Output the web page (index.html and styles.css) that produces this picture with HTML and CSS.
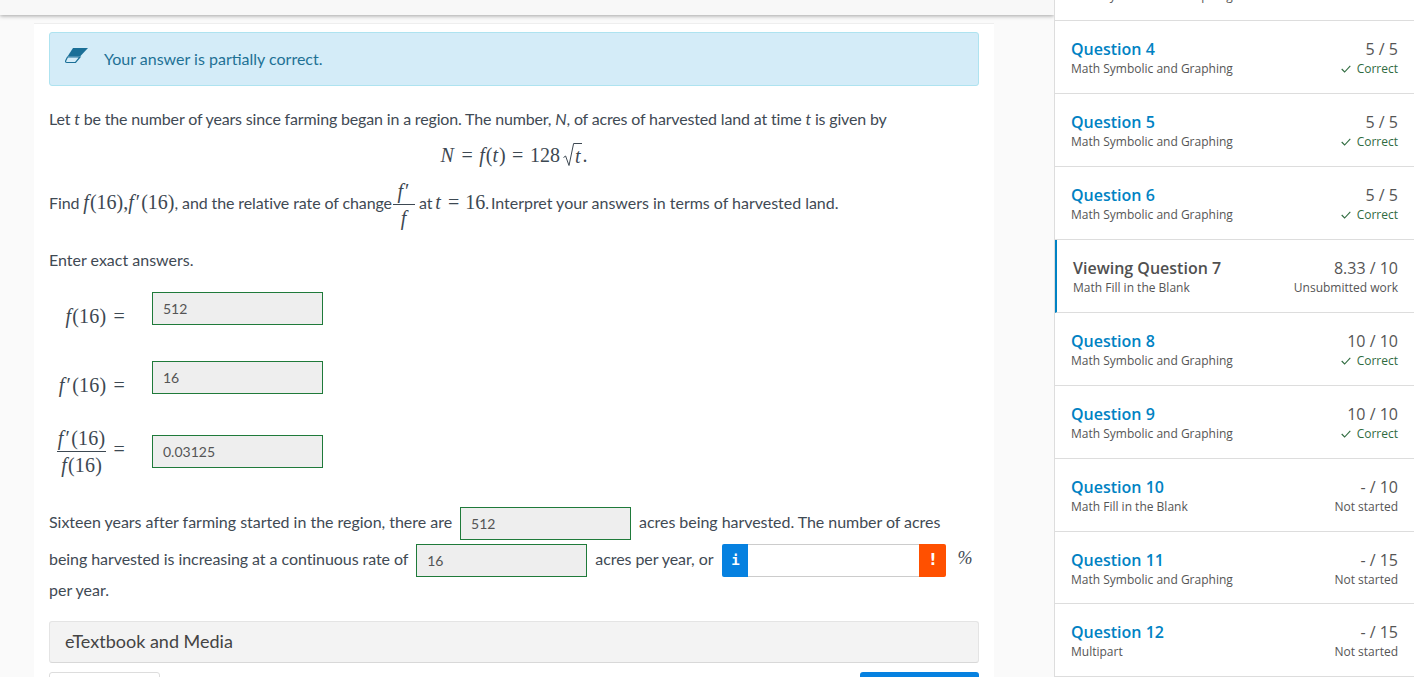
FILE: index.html
```html
<!DOCTYPE html>
<html lang="en">
<head>
    <meta charset="UTF-8">
    <title>Question 7</title>
    <link rel="stylesheet" href="styles.css">
</head>
<body>
    <div class="page">
        <main class="main">
            <div class="topbar"></div>
            <section class="content">
                <div class="alert">
                    <svg class="alert-icon" width="24" height="17" viewBox="0 0 24 17">
                        <path d="M8 1 H23 L15 9.5 H2.5 Z" fill="#1a6f97"/>
                        <path d="M2.5 10 H15 L10.5 15.5 H2 Q0 15.5 0.8 13.5 Z" fill="none" stroke="#1a6f97" stroke-width="1.2"/>
                    </svg>
                    <span class="alert-text">Your answer is partially correct.</span>
                </div>

                <p class="text first">Let <i>t</i> be the number of years since farming began in a region. The number, <i>N</i>, of acres of harvested land at time <i>t</i> is given by</p>

                <div class="display">
                    <span class="math"><i>N</i> = <i>f</i>(<i>t</i>) = 128</span>
                    <svg class="radical" width="11" height="24" viewBox="0 0 11 24">
                        <path d="M0.5 14.5 L2.6 13 L6 22.5 L10.6 0.5 H11" fill="none" stroke="#3d4852" stroke-width="1"/>
                    </svg><span class="math radicand"><i>t</i></span><span class="math">.</span>
                </div>

                <p class="text find">Find <span class="math"><i>f</i>(16),<i>f</i><span class="prime">′</span>(16)</span>, and the relative rate of change<span class="frac small math"><span class="num"><i>f</i><span class="prime">′</span></span><span class="den"><i>f</i></span></span> at <span class="math find-eq"><i>t</i> = 16</span>. <span class="find-end">Interpret your answers in terms of harvested land.</span></p>

                <p class="text enter">Enter exact answers.</p>

                <div class="math-row row-a">
                    <span class="row-label math"><i>f</i>(16) =</span>
                    <div class="answer">512</div>
                </div>
                <div class="math-row row-b">
                    <span class="row-label math"><i>f</i><span class="prime">′</span>(16) =</span>
                    <div class="answer">16</div>
                </div>
                <div class="math-row row-c">
                    <span class="row-label math">
                        <span class="frac"><span class="num"><i>f</i><span class="prime">′</span>(16)</span><span class="den"><i>f</i>(16)</span></span>
                        =
                    </span>
                    <div class="answer">0.03125</div>
                </div>

                <div class="sentence line-one">
                    Sixteen years after farming started in the region, there are
                    <div class="answer">512</div>
                    <span class="line-one-end">acres being harvested. The number of acres</span>
                </div>
                <div class="sentence line-two">
                    being harvested is increasing at a continuous rate of
                    <div class="answer">16</div>
                    acres per year, or
                    <div class="entry">
                        <span class="entry-btn info">i</span>
                        <span class="entry-field"></span>
                        <span class="entry-btn warn">!</span>
                    </div>
                    <span class="math percent">%</span>
                </div>
                <p class="text per-year">per year.</p>

                <div class="panel"><span class="panel-text">eTextbook and Media</span></div>

                <div class="actions">
                    <div class="btn-light"></div>
                    <div class="btn-blue"></div>
                </div>
            </section>
        </main>

        <aside class="sidebar">
            <div class="q-row cut">
                <div><div class="q-title">Question 3</div><div class="q-type">Math Symbolic and Graphing</div></div>
                <div class="q-right"><div class="q-score">5 / 5</div><div class="q-status ok"><svg class="tick" width="10" height="8" viewBox="0 0 10 8"><path d="M0.7 4 L3.6 7 L9.3 0.8" fill="none" stroke="#2f6b3f" stroke-width="1.1"/></svg>Correct</div></div>
            </div>
            <div class="q-row">
                <div><div class="q-title">Question 4</div><div class="q-type">Math Symbolic and Graphing</div></div>
                <div class="q-right"><div class="q-score">5 / 5</div><div class="q-status ok"><svg class="tick" width="10" height="8" viewBox="0 0 10 8"><path d="M0.7 4 L3.6 7 L9.3 0.8" fill="none" stroke="#2f6b3f" stroke-width="1.1"/></svg>Correct</div></div>
            </div>
            <div class="q-row">
                <div><div class="q-title">Question 5</div><div class="q-type">Math Symbolic and Graphing</div></div>
                <div class="q-right"><div class="q-score">5 / 5</div><div class="q-status ok"><svg class="tick" width="10" height="8" viewBox="0 0 10 8"><path d="M0.7 4 L3.6 7 L9.3 0.8" fill="none" stroke="#2f6b3f" stroke-width="1.1"/></svg>Correct</div></div>
            </div>
            <div class="q-row">
                <div><div class="q-title">Question 6</div><div class="q-type">Math Symbolic and Graphing</div></div>
                <div class="q-right"><div class="q-score">5 / 5</div><div class="q-status ok"><svg class="tick" width="10" height="8" viewBox="0 0 10 8"><path d="M0.7 4 L3.6 7 L9.3 0.8" fill="none" stroke="#2f6b3f" stroke-width="1.1"/></svg>Correct</div></div>
            </div>
            <div class="q-row current">
                <div><div class="q-title">Viewing Question 7</div><div class="q-type">Math Fill in the Blank</div></div>
                <div class="q-right"><div class="q-score">8.33 / 10</div><div class="q-status">Unsubmitted work</div></div>
            </div>
            <div class="q-row">
                <div><div class="q-title">Question 8</div><div class="q-type">Math Symbolic and Graphing</div></div>
                <div class="q-right"><div class="q-score">10 / 10</div><div class="q-status ok"><svg class="tick" width="10" height="8" viewBox="0 0 10 8"><path d="M0.7 4 L3.6 7 L9.3 0.8" fill="none" stroke="#2f6b3f" stroke-width="1.1"/></svg>Correct</div></div>
            </div>
            <div class="q-row">
                <div><div class="q-title">Question 9</div><div class="q-type">Math Symbolic and Graphing</div></div>
                <div class="q-right"><div class="q-score">10 / 10</div><div class="q-status ok"><svg class="tick" width="10" height="8" viewBox="0 0 10 8"><path d="M0.7 4 L3.6 7 L9.3 0.8" fill="none" stroke="#2f6b3f" stroke-width="1.1"/></svg>Correct</div></div>
            </div>
            <div class="q-row">
                <div><div class="q-title">Question 10</div><div class="q-type">Math Fill in the Blank</div></div>
                <div class="q-right"><div class="q-score">- / 10</div><div class="q-status">Not started</div></div>
            </div>
            <div class="q-row short">
                <div><div class="q-title">Question 11</div><div class="q-type">Math Symbolic and Graphing</div></div>
                <div class="q-right"><div class="q-score">- / 15</div><div class="q-status">Not started</div></div>
            </div>
            <div class="q-row">
                <div><div class="q-title">Question 12</div><div class="q-type">Multipart</div></div>
                <div class="q-right"><div class="q-score">- / 15</div><div class="q-status">Not started</div></div>
            </div>
        </aside>
    </div>
</body>
</html>
```

FILE: styles.css
```css
* {
    box-sizing: border-box;
}
html, body {
    margin: 0;
    height: 100%;
    overflow: hidden;
}
body {
    font-family: Lato, "Open Sans", sans-serif;
    font-size: 16px;
    color: #3f4a54;
    background: #fafafa;
}
.page {
    display: flex;
    height: 677px;
    overflow: hidden;
}

/* main column */
.main {
    width: 1054px;
    flex: none;
}
.topbar {
    height: 15px;
    background: #f8f8f8;
    box-shadow: 0 1px 4px rgba(0, 0, 0, 0.35);
}
.content {
    width: 960px;
    height: 700px;
    margin: 8px 0 0 34px;
    padding: 8px 15px 0;
    background: #fff;
    border-top: 1px solid #eeeeee;
}
.alert {
    display: flex;
    align-items: center;
    height: 54px;
    padding-left: 15px;
    background: #d4ecf8;
    border: 1px solid #aee3f0;
    border-radius: 3px;
    color: #1e7195;
}
.alert-icon {
    margin: -7px 15px 0 0;
}
.alert-text {
    margin-top: -2px;
}
.text {
    margin: 0;
    line-height: 24px;
}
.first {
    margin-top: 21px;
    letter-spacing: -0.16px;
}
.math {
    font-family: "Liberation Serif", serif;
    font-size: 20px;
    color: #3d4852;
    white-space: nowrap;
    word-spacing: 2px;
    letter-spacing: 0.2px;
}
.math i {
    padding-right: 1px;
}
.prime {
    margin-left: 1px;
    padding-right: 1px;
}
.display {
    display: flex;
    justify-content: center;
    align-items: center;
    height: 30px;
    margin-top: 9px;
}
.display .math {
    letter-spacing: 0;
    word-spacing: 1.5px;
}
.radical {
    flex: none;
    margin-left: 3px;
}
.radicand {
    height: 24px;
    line-height: 24px;
    padding: 0 1px;
    border-top: 1px solid #3d4852;
}
.find {
    height: 50px;
    margin-top: 7px;
    line-height: 50px;
    white-space: nowrap;
    letter-spacing: -0.1px;
}
.find .math {
    letter-spacing: 0;
}
.find .find-eq {
    word-spacing: 1px;
    margin-left: -1px;
}
.find-end {
    margin-left: -2px;
    letter-spacing: -0.02px;
}
.frac {
    display: inline-flex;
    flex-direction: column;
    align-items: center;
    vertical-align: middle;
    line-height: 1;
}
.frac .num {
    align-self: stretch;
    text-align: center;
    padding: 0 1px 3px;
    border-bottom: 1px solid #3d4852;
}
.frac .den {
    padding: 3px 1px 0;
}
.frac.small {
    width: 22px;
    margin-left: 1px;
}
.enter {
    margin-top: 21px;
}
.math-row {
    display: flex;
    align-items: center;
}
.row-label {
    width: 103px;
    margin-left: -27px;
    margin-right: 27px;
    text-align: right;
}
.row-a {
    height: 33px;
    margin-top: 20px;
}
.row-a .row-label, .row-b .row-label {
    padding-top: 15px;
}
.row-b {
    height: 33px;
    margin-top: 36px;
}
.row-c {
    height: 33px;
    margin-top: 41px;
}
.answer {
    display: flex;
    align-items: center;
    width: 171px;
    height: 33px;
    padding: 0 10px;
    background: #eeeeee;
    border: 1px solid #1f7a3a;
    font-size: 14px;
    color: #555;
    flex: none;
}
.sentence {
    display: flex;
    gap: 8px;
    height: 33px;
    line-height: 29px;
    white-space: nowrap;
}
.line-one {
    margin-top: 39px;
    letter-spacing: -0.02px;
}
.line-one-end {
    letter-spacing: -0.05px;
}
.line-two {
    margin-top: 4px;
    letter-spacing: -0.07px;
}
.entry {
    display: flex;
    width: 224px;
    height: 33px;
    margin-left: 1px;
}
.entry-btn {
    width: 26px;
    flex: none;
    display: flex;
    align-items: center;
    justify-content: center;
    font-family: "DejaVu Sans Mono", monospace;
    font-size: 14px;
    font-weight: bold;
    color: #fff;
}
.info {
    background: #0681e0;
    border-radius: 2px 0 0 2px;
}
.warn {
    width: 27px;
    background: #ff5000;
    border-radius: 0 2px 2px 0;
    font-family: "DejaVu Sans", sans-serif;
    font-size: 15px;
}
.entry-field {
    flex: 1;
    background: #fff;
    border: 1px solid #cccccc;
    border-left: none;
    border-right: none;
}
.percent {
    margin-left: 3px;
    font-size: 18px;
    font-style: italic;
}
.per-year {
    margin-top: 1px;
}
.panel {
    display: flex;
    align-items: center;
    height: 42px;
    margin-top: 19px;
    padding-left: 15px;
    background: #f3f3f3;
    border: 1px solid #e4e4e4;
    border-bottom-color: #d8d8d8;
    border-radius: 3px;
    font-size: 18px;
    color: #444;
}
.panel-text {
    margin-top: -2px;
}
.actions {
    display: flex;
    justify-content: space-between;
    margin-top: 9px;
}
.btn-light {
    width: 111px;
    height: 30px;
    background: #fff;
    border: 1px solid #dddddd;
    border-radius: 3px;
}
.btn-blue {
    width: 119px;
    height: 30px;
    background: #0681e0;
    border-radius: 3px;
}

/* question list */
.sidebar {
    flex: 1;
    background: #fff;
    border-left: 1px solid #dddddd;
    font-family: "Open Sans", sans-serif;
}
.q-row {
    display: flex;
    justify-content: space-between;
    align-items: center;
    height: 73px;
    padding: 2px 16px 0;
    border-bottom: 1px solid #dddddd;
}
.q-row.short {
    height: 72px;
    padding-top: 3px;
}
.q-row.cut {
    margin-top: -52px;
}
.q-title {
    margin-bottom: 1px;
    font-size: 16px;
    font-weight: 600;
    line-height: 20px;
    color: #0082c3;
}
.q-type {
    font-size: 12px;
    line-height: 18px;
    color: #555;
}
.q-right {
    text-align: right;
}
.q-score {
    margin-bottom: 1px;
    font-size: 16px;
    line-height: 20px;
    color: #555;
}
.q-status {
    font-size: 12px;
    line-height: 18px;
    color: #555;
}
.q-status.ok {
    color: #2f6b3f;
}
.tick {
    margin-right: 6px;
}
.q-row.current {
    border-left: 2px solid #0082c3;
}
.current .q-title {
    color: #505050;
}
```
